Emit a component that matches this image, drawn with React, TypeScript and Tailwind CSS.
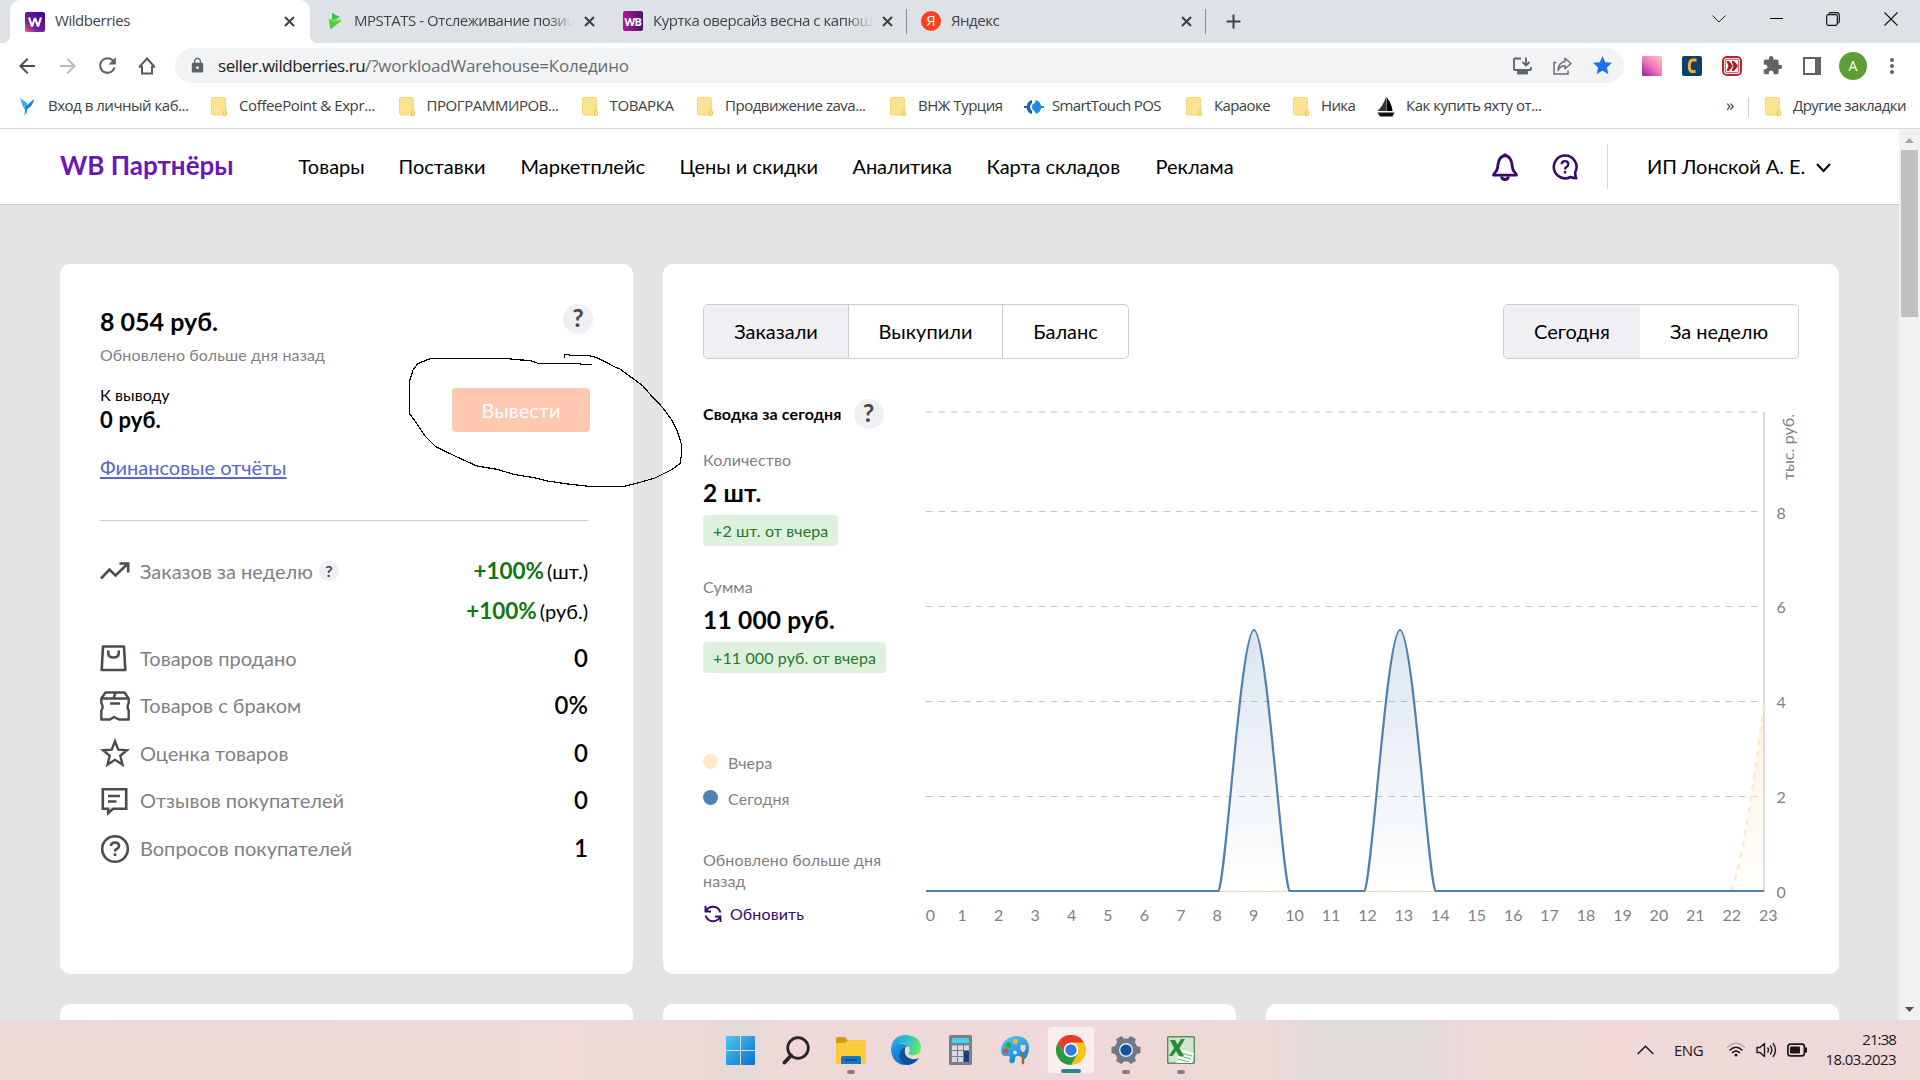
import React from "react";
import {
  MdArrowBack,
  MdArrowForward,
  MdRefresh,
  MdLock,
  MdStar,
  MdExtension,
  MdMoreVert,
} from "react-icons/md";

/* ---------- browser chrome ---------- */

function CloseX() {
  return (
    <svg width="11" height="11" viewBox="0 0 11 11" className="shrink-0">
      <path d="M1 1L10 10M10 1L1 10" stroke="#3c4043" strokeWidth="2" />
    </svg>
  );
}

function TabTitle({ children, className = "" }: { children: React.ReactNode; className?: string }) {
  return (
    <span className={`pb-0.5 whitespace-nowrap text-[15px] tracking-[-0.45px] text-[#3f4347] ${className}`}>
      {children}
    </span>
  );
}

function TabStrip() {
  return (
    <div className="flex h-[43px] bg-[#dee1e6]">
      <span className="mt-[35px] ml-0.5 h-2 w-2 bg-[radial-gradient(circle_at_0_0,transparent_8px,white_8px)]" />
      <div className="flex w-[300px] items-center rounded-t-[10px] bg-white pl-[15px]">
        <svg width="20" height="20" viewBox="0 0 20 20" className="shrink-0">
          <defs>
            <linearGradient id="wbTab" x1="0" y1="1" x2="0.8" y2="0">
              <stop offset="0" stopColor="#e8606a" />
              <stop offset="0.35" stopColor="#7a1fa8" />
              <stop offset="1" stopColor="#430a8c" />
            </linearGradient>
          </defs>
          <rect width="20" height="20" rx="2" fill="url(#wbTab)" />
          <path d="M4 5.500l3 9 3-8.500 3 8.500 3-9" fill="none" stroke="#fff" strokeWidth="2.200" strokeLinejoin="bevel" />
        </svg>
        <TabTitle className="ml-[10px] w-[229px]">Wildberries</TabTitle>
        <CloseX />
      </div>
      <span className="mt-[35px] h-2 w-2 bg-[radial-gradient(circle_at_100%_0,transparent_8px,white_8px)]" />
      <div className="flex w-[291px] items-center pb-[1px]">
        <svg width="13" height="16" viewBox="0 0 13 16" className="ml-[11px] shrink-0">
          <path d="M3 0L11 4 3 8Z" fill="#2dc653" />
          <path d="M0 6L12 6.500 12 9 4 11Z" fill="#7be04a" />
          <path d="M0 6L5 9 12 8 2 16 1 15Z" fill="#4cd137" />
        </svg>
        <TabTitle className="ml-[12px] w-[221px] [mask-image:linear-gradient(to_right,black_88%,transparent)]">
          MPSTATS - Отслеживание пози<span className="opacity-60">ц</span>
        </TabTitle>
        <span className="ml-[9px] flex">
          <CloseX />
        </span>
        <span className="ml-[14px] h-[25px] w-px bg-[#888b90]" />
      </div>
      <div className="flex w-[298px] items-center pb-[1px] pl-[14px]">
        <span className="flex h-5 w-5 shrink-0 items-center justify-center rounded-[2px] bg-gradient-to-r from-[#b10f96] to-[#4a1270] text-[11px] leading-none font-bold tracking-[-0.5px] text-white">
          WB
        </span>
        <TabTitle className="ml-[10px] w-[220px] [mask-image:linear-gradient(to_right,black_88%,transparent)]">
          Куртка оверсайз весна с капюш
        </TabTitle>
        <span className="ml-[9px] flex">
          <CloseX />
        </span>
        <span className="ml-[13px] h-[25px] w-px bg-[#888b90]" />
      </div>
      <div className="flex w-[299px] items-center pb-[1px] pl-[14px]">
        <span className="flex h-5 w-5 shrink-0 items-center justify-center rounded-full bg-[#fc3f1d] pb-px text-[15px] leading-none text-white">
          Я
        </span>
        <TabTitle className="ml-[10px] w-[230px]">Яндекс</TabTitle>
        <CloseX />
        <span className="ml-[13px] h-[25px] w-px bg-[#888b90]" />
      </div>
      <svg width="15" height="15" viewBox="0 0 15 15" className="mt-[14px] ml-[20px]">
        <path d="M7.500 0.500V14.500M0.500 7.500H14.500" stroke="#3c4043" strokeWidth="2" />
      </svg>
      <div className="mr-[22px] ml-auto flex h-[37px] items-center">
        <svg width="14" height="8" viewBox="0 0 14 8" fill="none" stroke="#222" className="mr-[44px]">
          <path d="M0.500 0.500L7 7 13.500 0.500" />
        </svg>
        <span className="mr-[43px] h-px w-[13px] bg-black" />
        <svg width="14" height="14" viewBox="0 0 14 14" fill="none" stroke="#111" strokeWidth="1.200" className="mr-[44px]">
          <rect x="0.700" y="2.700" width="10.600" height="10.600" rx="1.500" />
          <path d="M3 2.500V2.200Q3 0.700 4.500 0.700H10.500Q13.300 0.700 13.300 3.500V9.500Q13.300 11 12 11" />
        </svg>
        <svg width="14" height="14" viewBox="0 0 14 14" stroke="#111" strokeWidth="1.100">
          <path d="M0.500 0.500L13.500 13.500M13.500 0.500L0.500 13.500" />
        </svg>
      </div>
    </div>
  );
}

function Toolbar() {
  return (
    <div className="flex h-[45px] items-center bg-white text-[#5f6368]">
      <MdArrowBack size={24} className="ml-[15px] text-[#494c50]" />
      <MdArrowForward size={24} className="ml-[17px] text-[#b9bbbe]" />
      <MdRefresh size={25} className="ml-[15px]" />
      <svg width="18" height="18" viewBox="0 0 18 18" fill="none" stroke="#55585c" strokeWidth="2" className="ml-[18px]">
        <path d="M1.500 9.800L9 1.500 16.500 9.800M0.800 9.800H4V16.500H14V9.800H17.200" />
      </svg>
      <div className="ml-[19px] flex h-[35px] w-[1449px] items-center rounded-full bg-[#f1f3f4]">
        <MdLock size={17} className="ml-[14px] text-[#5f6368]" />
        <span className="ml-[12px] whitespace-nowrap text-[17px] tracking-[-0.47px] text-[#202124]">
          seller.wildberries.ru
          <span className="tracking-[-0.18px] text-[#686c71]">/?workloadWarehouse=Коледино</span>
        </span>
        <div className="mr-[10px] ml-auto flex items-center">
          <svg width="19" height="18" viewBox="0 0 19 18" fill="none" stroke="#5f6368" strokeWidth="1.800" className="mr-[21px]">
            <path d="M8 1.500H2Q1 1.500 1 2.500V12Q1 13 2 13H17Q18 13 18 12V10" />
            <path d="M13 0.500V8M9.500 5L13 8.500 16.500 5" />
            <rect x="5" y="13.500" width="9" height="3" fill="#5f6368" />
          </svg>
          <svg width="19" height="18" viewBox="0 0 19 18" fill="none" stroke="#6b6e73" strokeWidth="1.500" className="mr-[19px]">
            <path d="M3.500 5.500H1V17H15V13.500" />
            <path d="M12 1.200L18 6.500 12 11.800V8.700Q7.500 8.500 5 13.500 5.500 5.500 12 4.500Z" strokeLinejoin="round" />
          </svg>
          <MdStar size={23} className="text-[#1a73e8]" />
        </div>
      </div>
      <svg width="20" height="20" viewBox="0 0 20 20" className="ml-[18px]">
        <defs>
          <linearGradient id="pinkExt" x1="0" y1="1" x2="0.900" y2="0">
            <stop offset="0" stopColor="#8e1fa5" />
            <stop offset="0.500" stopColor="#f075b8" />
            <stop offset="1" stopColor="#ffc2b8" />
          </linearGradient>
        </defs>
        <rect width="20" height="20" rx="1.500" fill="url(#pinkExt)" />
      </svg>
      <svg width="20" height="20" viewBox="0 0 20 20" className="ml-[20px]">
        <rect width="20" height="20" rx="2" fill="#10406e" />
        <path d="M14.500 4H11Q7.500 4 7.300 9.500T10 15.500H13.500" fill="none" stroke="#fbb216" strokeWidth="3" />
      </svg>
      <svg width="20" height="20" viewBox="0 0 20 20" className="ml-[20px]">
        <rect x="1" y="1" width="18" height="18" rx="4" fill="#fff" stroke="#b9262c" strokeWidth="2" />
        <rect x="3.300" y="3.300" width="13.400" height="13.400" rx="2" fill="none" stroke="#c9474b" strokeWidth="1" />
        <path d="M5 5.500L7 5.500 10.300 10 7 14.500 5 14.500 7 10ZM10 5.500L12 5.500 15.500 10 12 14.500 10 14.500 12 10Z" fill="#a81c22" stroke="#a81c22" />
      </svg>
      <MdExtension size={21} className="ml-[20px]" />
      <span className="ml-[20px] flex h-[18px] w-[18px] border-2 border-r-[6px] border-[#5f6368]" />
      <span className="ml-[18px] flex h-7 w-7 items-center justify-center rounded-full bg-[#5f9e35] text-[14px] text-white">
        A
      </span>
      <MdMoreVert size={24} className="ml-[13px]" />
    </div>
  );
}

function Folder() {
  return (
    <svg width="16" height="19" viewBox="0 0 16 19" className="shrink-0">
      <rect x="0.500" y="0.500" width="14" height="17.500" rx="1.500" fill="#fde391" stroke="#f3d77c" />
      <path d="M12.500 18.500V14.500Q12.500 13 14 13 15.500 13 15.500 14.500V17Q15.500 18.500 14 18.500Z" fill="#fde391" stroke="#efc650" />
    </svg>
  );
}

function Bookmark({ icon, label, className }: { icon?: React.ReactNode; label: string; className: string }) {
  return (
    <div className={`flex shrink-0 items-center whitespace-nowrap ${className}`}>
      <span className="flex w-[28px] shrink-0">{icon ?? <Folder />}</span>
      <span className="pb-0.5">{label}</span>
    </div>
  );
}

function Bookmarks() {
  return (
    <div className="flex h-[41px] items-center border-b border-[#d5d7da] bg-white pb-[3px] pl-[20px] text-[15px] tracking-[-0.48px] text-[#3c4043]">
      <Bookmark
        className="w-[191px]"
        label="Вход в личный каб..."
        icon={
          <svg width="15" height="18" viewBox="0 0 15 18">
            <path d="M0 0L7 5V18Q6 12 3 9Z" fill="#38b0f0" />
            <path d="M14 1Q13 8 7.500 11L4 18 6 8Z" fill="#1583e0" />
          </svg>
        }
      />
      <Bookmark className="w-[187.500px] tracking-[-0.38px]" label="CoffeePoint & Expr..." />
      <Bookmark className="w-[183px] tracking-[-0.43px]" label="ПРОГРАММИРОВ..." />
      <Bookmark className="w-[115.500px] tracking-[-0.38px]" label="ТОВАРКА" />
      <Bookmark className="w-[193px]" label="Продвижение zava..." />
      <Bookmark className="w-[134px]" label="ВНЖ Турция" />
      <Bookmark
        className="w-[162px] tracking-[-0.62px]"
        label="SmartTouch POS"
        icon={
          <svg width="20" height="14" viewBox="0 0 20 14">
            <path d="M8 0V3Q6 4.500 6 7T8 11V14Q3.500 13 2.800 8H0V6H2.800Q3.500 1 8 0Z" fill="#1565b0" />
            <path d="M12 0Q16.500 1.500 17 6H20V8H17Q16.500 12.500 12 14 11.500 11 8.500 9.500 7.500 7 8.500 4.500 11.500 3 12 0Z" fill="#1e88e5" />
          </svg>
        }
      />
      <Bookmark className="w-[107px] tracking-[-0.6px]" label="Караоке" />
      <Bookmark className="w-[84px] tracking-[-0.65px]" label="Ника" />
      <Bookmark
        className="w-[349px] pl-px"
        label="Как купить яхту от..."
        icon={
          <svg width="18" height="20" viewBox="0 0 18 20" className="-ml-px">
            <path d="M9 0V14H0.500Q6 9 9 0Z" fill="#333" />
            <path d="M9.500 0Q15 7 15.500 14H9.500Z" fill="#000" />
            <path d="M0.500 15.500H17.500L15.500 19.500H3Z" fill="#111" />
          </svg>
        }
      />
      <span className="w-[22px] pb-[4px] text-[17px] tracking-normal">»</span>
      <span className="mr-[16px] h-5 w-px bg-[#c9ccd0]" />
      <div className="flex items-center whitespace-nowrap tracking-[-0.56px]">
        <span className="flex w-[28px]">
          <Folder />
        </span>
        <span className="pb-0.5">Другие закладки</span>
      </div>
    </div>
  );
}

/* ---------- page ---------- */

function Header() {
  return (
    <header className="flex h-[76px] items-center border-b border-[#cbcbcd] bg-white pl-[60px] text-black">
      <span className="w-[239px] pb-[3px] text-[26px] font-bold text-[#6a17b8]">WB Партнёры</span>
      <nav className="ml-[-0.500px] flex whitespace-nowrap pb-[2px] text-[20px]">
        <span className="w-[100px]">Товары</span>
        <span className="w-[122px]">Поставки</span>
        <span className="w-[159px]">Маркетплейс</span>
        <span className="w-[173px]">Цены и скидки</span>
        <span className="w-[134px] tracking-[-0.050px]">Аналитика</span>
        <span className="w-[169px] tracking-[-0.050px]">Карта складов</span>
        <span className="w-[78px]">Реклама</span>
      </nav>
      <svg width="26" height="28" viewBox="0 0 26 28" fill="none" stroke="#380b6b" strokeWidth="2.800" strokeLinejoin="round" className="ml-[258px]">
        <path d="M13 2.500Q7 3.500 6 11.500 5.500 17 3.500 19 1.500 20.500 1.500 22.200H24.500Q24.500 20.500 22.500 19 20.500 17 20 11.500 19 3.500 13 2.500Z" />
        <path d="M13 0.500V3M9.500 23.500Q10 26.500 13 26.500T16.500 23.500" />
      </svg>
      <svg width="26" height="26" viewBox="0 0 26 26" fill="none" stroke="#380b6b" strokeWidth="2.600" className="ml-[34px]">
        <path d="M13 1.500A11.400 11.400 0 1 0 18.500 23Q21 24.300 24.300 24.300 22.800 21 23.300 18A11.400 11.400 0 0 0 13 1.500Z" strokeLinejoin="round" />
        <path d="M9.700 10.300Q9.700 7.200 13 7.200T16.300 10.200Q16.300 12 14.600 12.900 13 13.700 13 15.500M13 17V19.600" strokeWidth="2.300" />
      </svg>
      <span className="ml-[29px] h-[45px] w-px bg-[#d5d5da]" />
      <span className="ml-[39.500px] whitespace-nowrap pb-[2px] text-[20px] tracking-[-0.050px]">ИП Лонской А. Е.</span>
      <svg width="15" height="10" viewBox="0 0 15 10" fill="none" stroke="#000" strokeWidth="2" className="mt-0.5 ml-[11px]">
        <path d="M1 1L7.500 8 14 1" />
      </svg>
    </header>
  );
}

function HelpBadge({ small }: { small?: boolean }) {
  return small ? (
    <span className="flex h-5 w-5 items-center justify-center rounded-full bg-[#f0eff4] pb-px text-[16px] font-bold text-[#46464c]">?</span>
  ) : (
    <span className="flex h-[30px] w-[30px] items-center justify-center rounded-full bg-[#f0eff4] pb-[2px] text-[25px] font-bold text-[#46464c]">
      ?
    </span>
  );
}

const iconProps = {
  width: 30,
  height: 30,
  viewBox: "0 0 30 30",
  fill: "none",
  stroke: "#4b4b52",
  strokeWidth: 2.6,
} as const;

function Stat({ icon, label, value }: { icon: React.ReactNode; label: string; value: string }) {
  return (
    <div className="flex h-[47.5px] items-center">
      <span className="flex w-[40px] items-center">{icon}</span>
      <span className="pb-[2px] text-[20px] text-[#7f7f85]">{label}</span>
      <span className="ml-auto pb-[2px] text-[24px] font-semibold text-black">{value}</span>
    </div>
  );
}

function BalanceCard() {
  return (
    <section className="h-[710px] w-[573px] rounded-[10px] bg-white pt-[40px] pr-[45px] pl-[40px]">
      <div className="flex justify-between">
        <div className="flex flex-col whitespace-nowrap">
          <span className="h-[36px] text-[25px] leading-[34px] font-bold text-black">8 054 руб.</span>
          <span className="h-[30px] text-[16px] leading-[29px] tracking-[0.12px] text-[#7f7f85]">Обновлено больше дня назад</span>
          <span className="mt-3 h-[26px] text-[16px] leading-[26px] tracking-[0.1px] text-black">К выводу</span>
          <span className="h-[24px] text-[22px] leading-[24px] font-bold tracking-[0.15px] text-black">0 руб.</span>
          <span className="mt-[11px] mb-px flex h-[48px] items-center">
            <span className="text-[20px] text-[#5867c8] underline decoration-2 underline-offset-[2px]">Финансовые отчёты</span>
          </span>
        </div>
        <div className="mr-[-5px] flex flex-col items-end">
          <HelpBadge />
          <button className="mt-[54px] mr-[3px] h-[44px] w-[138px] rounded-[4px] bg-[#ffc8b1] text-[20px] text-white">Вывести</button>
        </div>
      </div>
      <div className="mt-[28px] h-px bg-[#cbcbd0]" />
      <div className="mt-[30px] flex h-[40px] items-center">
        <span className="flex w-[40px] items-center">
          <svg {...iconProps} height={18} viewBox="0 0 30 18">
            <path d="M1 16.500L9.500 7.500 15.500 13.500 27.500 2M19.500 1.500H28.200V10.500" />
          </svg>
        </span>
        <span className="text-[20px] text-[#7f7f85]">Заказов за неделю</span>
        <span className="ml-[6px]">
          <HelpBadge small />
        </span>
        <span className="ml-auto text-[20px] text-black">
          <span className="mr-[3px] text-[22.500px] font-bold text-[#107810]">+100%</span>(шт.)
        </span>
      </div>
      <div className="mb-[4px] flex h-[40px] items-center justify-end text-[20px] text-black">
        <span className="mr-[3px] text-[22.500px] font-bold text-[#107810]">+100%</span>(руб.)
      </div>
      <Stat
        label="Товаров продано"
        value="0"
        icon={
          <svg {...iconProps} className="mb-[2px]">
            <path d="M3 3.500H24L25.300 27H1.700Z" strokeLinejoin="round" />
            <path d="M8.300 7.500V10Q8.300 14.500 13.500 14.500T18.700 10V7.500" />
          </svg>
        }
      />
      <Stat
        label="Товаров с браком"
        value="0%"
        icon={
          <svg {...iconProps} strokeWidth={2.4} strokeLinejoin="round">
            <path d="M1.300 7.500L5.500 1.500H24.500L28.700 7.500V12Q26.500 16 28.700 19.500V28.500H19L14 26 10 28.500H1.300V20Q3.800 15.500 1.300 12Z" />
            <path d="M1.300 7.500H28.700M15.500 1.500L13.500 7.500M10 12.500H20" />
          </svg>
        }
      />
      <Stat
        label="Оценка товаров"
        value="0"
        icon={
          <svg {...iconProps} strokeWidth={2.4} className="mb-[2px]">
            <path d="M15 3.200L18.300 11.600 27 12.200 20.300 17.800 22.500 26.600 15 21.800 7.500 26.600 9.700 17.800 3 12.200 11.700 11.600Z" />
          </svg>
        }
      />
      <Stat
        label="Отзывов покупателей"
        value="0"
        icon={
          <svg {...iconProps} className="mb-px">
            <path d="M2.800 3.300H26.200V22.700H13L8.200 27V22.700H2.800Z" />
            <path d="M8 10H20M8 15.500H16.500" />
          </svg>
        }
      />
      <Stat
        label="Вопросов покупателей"
        value="1"
        icon={
          <svg {...iconProps}>
            <circle cx="15" cy="15" r="12.800" />
            <path d="M11 12Q11 8.500 15 8.500T19 12Q19 13.800 17 14.800 15 15.700 15 17.500M15 19.300V22" />
          </svg>
        }
      />
    </section>
  );
}

const GRID = [412, 511.5, 606.5, 701.5, 796.5];
const HOURS = Array.from({ length: 24 }, (_, i) => i);
const hourX = (i: number) => (i === 0 ? 930.5 : i < 10 ? 925.8 + i * 36.43 : 930.3 + i * 36.43);
const TODAY =
  "M926 891H1218.500C1226 880 1241 630 1254 630S1282 880 1289.500 891H1364.500C1372 880 1387 630 1400 630S1428 880 1435.500 891H1764";

function Chart() {
  return (
    <svg width="890" height="540" viewBox="916 400 890 540" fill="none" className="font-[Lato,sans-serif]">
      <defs>
        <linearGradient id="todayFill" x1="0" y1="630" x2="0" y2="891" gradientUnits="userSpaceOnUse">
          <stop offset="0" stopColor="#4f81b3" stopOpacity="0.200" />
          <stop offset="1" stopColor="#4f81b3" stopOpacity="0" />
        </linearGradient>
        <linearGradient id="prevFill" x1="0" y1="702" x2="0" y2="891" gradientUnits="userSpaceOnUse">
          <stop offset="0" stopColor="#fdeac7" stopOpacity="0.600" />
          <stop offset="1" stopColor="#fdeac7" stopOpacity="0.050" />
        </linearGradient>
      </defs>
      {GRID.map((y) => (
        <path key={y} d={`M926 ${y}H1759`} stroke="#c6c6c8" strokeWidth="1.200" strokeDasharray="6.500 6" />
      ))}
      <path d="M1730 891C1739 880 1752 800 1764 703V891Z" fill="url(#prevFill)" />
      <path d="M1764 412V891" stroke="#dcdcdc" strokeWidth="2" />
      <path d="M926 891.500H1730" stroke="#d9d4cc" strokeWidth="1" />
      <path d="M926 891H1730" stroke="#fdeac7" strokeWidth="1.500" strokeDasharray="6 5.500" />
      <path d="M1730 891C1739 880 1752 800 1764 703" stroke="#fdeac7" strokeWidth="2.500" strokeDasharray="6 5.500" />
      <path d={TODAY} fill="url(#todayFill)" />
      <path d={TODAY} stroke="#4f81b0" strokeWidth="2.200" strokeLinejoin="round" />
      <g fill="#808086" fontSize="16">
        {HOURS.map((i) => (
          <text key={i} x={hourX(i)} y="920.500" textAnchor="middle">
            {i}
          </text>
        ))}
        {[8, 6, 4, 2, 0].map((v, k) => (
          <text key={v} x="1776.500" y={518.5 + k * 94.9}>
            {v}
          </text>
        ))}
        <text transform="translate(1793.500 480) rotate(-90)" letterSpacing="0.100">
          тыс. руб.
        </text>
      </g>
    </svg>
  );
}

function SummaryCard() {
  return (
    <section className="h-[710px] w-[1176px] rounded-[10px] bg-white pt-[40px] pl-[40px]">
      <div className="flex justify-between pr-[40px] text-[20px] text-black">
        <div className="flex h-[55px] overflow-hidden rounded-[5px] border border-[#cbcbd2]">
          <span className="flex w-[144px] items-center justify-center bg-[#f0eff4] pb-[2px]">Заказали</span>
          <span className="flex w-[154px] items-center justify-center border-l border-[#cbcbd2] pb-[2px]">Выкупили</span>
          <span className="flex w-[126px] items-center justify-center border-l border-[#cbcbd2] pb-[2px]">Баланс</span>
        </div>
        <div className="flex h-[55px] overflow-hidden rounded-[5px] border border-[#cbcbd2]">
          <span className="flex w-[136px] items-center justify-center bg-[#f0eff4] pb-[2px]">Сегодня</span>
          <span className="flex w-[158px] items-center justify-center pb-[2px]">За неделю</span>
        </div>
      </div>
      <div className="mt-[41px] flex">
        <div className="flex w-[213px] shrink-0 flex-col items-start text-[16px] tracking-[0.12px] whitespace-nowrap text-[#7f7f85]">
          <div className="mt-[-1px] flex h-[30px] items-center gap-[12px]">
            <span className="font-bold text-black">Сводка за сегодня</span>
            <HelpBadge />
          </div>
          <span className="mt-[20px] h-[22px] leading-[22px]">Количество</span>
          <span className="mt-[5px] h-[34px] text-[24.500px] leading-[34px] font-bold text-black">2 шт.</span>
          <span className="mt-[5px] h-[31px] rounded-[4px] bg-[#def1dd] px-[10px] leading-[32px] text-[#23792b]">+2 шт. от вчера</span>
          <span className="mt-[30px] h-[22px] leading-[22px]">Сумма</span>
          <span className="mt-[5px] h-[34px] text-[24.500px] leading-[34px] font-bold tracking-[0.2px] text-black">11 000 руб.</span>
          <span className="mt-[5px] h-[31px] rounded-[4px] bg-[#def1dd] px-[10px] leading-[32px] text-[#23792b]">
            +11 000 руб. от вчера
          </span>
          <div className="mt-[78px] flex h-[24px] items-center">
            <span className="mr-[10px] mb-[3px] h-[15px] w-[15px] rounded-full bg-[#fdeac7]" />
            Вчера
          </div>
          <div className="mt-[12px] flex h-[24px] items-center">
            <span className="mr-[10px] mb-[3px] h-[15px] w-[15px] rounded-full bg-[#4f81b3]" />
            Сегодня
          </div>
          <span className="mt-[38px] leading-[21px]">
            Обновлено больше дня
            <br />
            назад
          </span>
          <div className="mt-[11px] flex h-[24px] items-center text-[#380b6b]">
            <svg width="18" height="18" viewBox="0 0 18 18" fill="none" stroke="#380b6b" strokeWidth="1.900" className="mr-[8px] ml-px">
              <path d="M1.500 1V6.500H7M1.800 6.300Q4 1.800 9 1.800 14.500 1.800 16.500 7.500" />
              <path d="M16.500 17V11.500H11M16.200 11.700Q14 16.200 9 16.200 3.500 16.200 1.500 10.500" />
            </svg>
            Обновить
          </div>
        </div>
        <Chart />
      </div>
    </section>
  );
}

function Scrollbar() {
  return (
    <div className="flex w-[21px] shrink-0 flex-col items-center bg-[#f1f1f1]">
      <svg width="9" height="5" viewBox="0 0 9 5" className="mt-[9px]">
        <path d="M0 5L4.500 0 9 5Z" fill="#a3a3a3" />
      </svg>
      <div className="mt-[7px] h-[167px] w-[17px] bg-[#c1c1c1]" />
      <svg width="9" height="5" viewBox="0 0 9 5" className="mt-auto mb-[8px]">
        <path d="M0 0L4.500 5 9 0Z" fill="#505050" />
      </svg>
    </div>
  );
}

/* Freehand pen mark around the withdraw button */
function PenMark() {
  return (
    <svg width="280" height="140" viewBox="405 350 280 140" fill="none" className="pointer-events-none absolute top-[350px] left-[405px]">
      <path
        d="M564.500 358V354.500H567L571 355.500H589L596.500 357.500 616 367.500 620 369 643 386 648 392 663.500 408.500 672 420.500 677.500 431.500 681.500 444.500V455L680 463.500 672 469.500 655 478 641 482 624 486.500H590L568 484 547.500 481 533 477.500 514 474.500 498 469.500 477 466 456 456.500 435.500 446.500 425 436 415 421 409.500 413.500V381.500L413 370 418 363.500 430.500 358.500H508L514 359.500 530 360.500 538.500 363.500H578.500L583 364.500H592"
        stroke="#000"
        strokeWidth="1.200"
        shapeRendering="crispEdges"
      />
    </svg>
  );
}

/* ---------- taskbar ---------- */

function TaskItem({ children, state }: { children: React.ReactNode; state?: "open" | "active" }) {
  return (
    <div
      className={`mx-[3.500px] flex h-12 w-12 flex-col items-center rounded-[4px] pt-[8px] ${
        state === "active" ? "border border-[#ecdede] bg-[#f8eeee] pt-[7px]" : ""
      }`}
    >
      <span className="flex h-8 w-8 items-center justify-center">{children}</span>
      {state === "open" && <span className="mt-[4px] h-[4px] w-[8px] rounded-full bg-[#8a7d80]" />}
      {state === "active" && <span className="mt-[4px] h-[4px] w-[20px] rounded-full bg-[#2b8291]" />}
    </div>
  );
}

function TaskIcons() {
  return (
    <div className="ml-[713px] flex pt-[6px]">
      <TaskItem>
        <svg width="29" height="29" viewBox="0 0 29 29">
          <defs>
            <linearGradient id="winG" x1="0" y1="0" x2="1" y2="1">
              <stop offset="0" stopColor="#4cc8f6" />
              <stop offset="1" stopColor="#0a6fce" />
            </linearGradient>
          </defs>
          <path d="M0 1Q0 0 1 0H14V14H0ZM15 0H28Q29 0 29 1V14H15ZM0 15H14V29H1Q0 29 0 28ZM15 15H29V28Q29 29 28 29H15Z" fill="url(#winG)" />
        </svg>
      </TaskItem>
      <TaskItem>
        <svg width="28" height="29" viewBox="0 0 28 29" fill="none" stroke="#2b2729">
          <circle cx="16" cy="12" r="10.300" strokeWidth="2.800" />
          <path d="M9 19.500L2.500 26.500" strokeWidth="3.800" strokeLinecap="round" />
        </svg>
      </TaskItem>
      <TaskItem state="open">
        <svg width="30" height="27" viewBox="0 0 30 27">
          <path d="M0 1.500Q0 0 1.500 0H9L12 3.500H29V10H0Z" fill="#d99a18" />
          <path d="M0 6H9L12 3.500H29Q30 3.500 30 5V27H0Z" fill="#fbcb3c" />
          <path d="M5 27V21Q5 19 7 19H23Q25 19 25 21V27Z" fill="#1878c8" />
          <path d="M9 23H21" stroke="#0c4a86" strokeWidth="1.500" />
        </svg>
      </TaskItem>
      <TaskItem>
        <svg width="30" height="30" viewBox="0 0 30 30">
          <defs>
            <linearGradient id="edgeA" x1="0" y1="0.300" x2="1" y2="0.600">
              <stop offset="0" stopColor="#1e9ee0" />
              <stop offset="0.550" stopColor="#33c5c9" />
              <stop offset="1" stopColor="#6be85c" />
            </linearGradient>
            <linearGradient id="edgeB" x1="0" y1="0" x2="0.600" y2="1">
              <stop offset="0" stopColor="#1da1e8" />
              <stop offset="1" stopColor="#1267c2" />
            </linearGradient>
          </defs>
          <path d="M0 14Q1.500 0 15.500 0 29 1 30 12.500 30 20 22.500 20.500 17 20.500 17.500 18 19.500 15.500 18 12 15 7.500 9 8.500 3 9.500 0 14Z" fill="url(#edgeA)" />
          <path d="M0 14Q3 8.500 9 8.500 14.500 8.500 17.500 11.500 12 11.500 11 17 10.500 24 18 28 21 29.500 19 29.500 10 31.500 4 25.500 0 20.500 0 14Z" fill="url(#edgeB)" />
          <path d="M12 13.500Q7 18 9 23.500 12 30 18 29.800 24 29 28 22.800 22 26 17 22.500 12 19 14.500 12Z" fill="#10509c" />
        </svg>
      </TaskItem>
      <TaskItem>
        <svg width="23" height="30" viewBox="0 0 23 30">
          <rect width="23" height="30" rx="1.500" fill="#7b8087" />
          <rect x="3" y="3" width="17" height="5" rx="0.500" fill="#45cff2" />
          <path d="M3 10.500H8V15H3ZM9 10.500H14V15H9ZM15 10.500H20V15H15ZM3 16H8V21H3ZM9 16H14V21H9ZM3 22H8V27H3ZM9 22H14V27H9Z" fill="#d6dae0" />
          <rect x="15" y="16" width="5" height="11" fill="#173f86" />
        </svg>
      </TaskItem>
      <TaskItem>
        <svg width="29" height="30" viewBox="0 0 29 30">
          <defs>
            <linearGradient id="paintG" x1="0" y1="0" x2="0.500" y2="1">
              <stop offset="0" stopColor="#55cdf0" />
              <stop offset="1" stopColor="#1583d6" />
            </linearGradient>
          </defs>
          <path d="M0 15Q2 2 15 1 27 1 28 12 28 20 24 24L18 21Q14 20 14 25 13 29 10 28 7 27 9 23 9 20 6 21 0 22 0 15Z" fill="url(#paintG)" />
          <circle cx="7.500" cy="10" r="2.600" fill="#2ba640" />
          <circle cx="14.500" cy="6.500" r="2.600" fill="#f5b82e" />
          <circle cx="4.800" cy="16" r="2.600" fill="#d8512f" />
          <circle cx="14" cy="17.500" r="2" fill="#c9ecfa" />
          <path d="M20.800 16H23.200V28Q22 31 20.800 28Z" fill="#a4632c" />
          <path d="M19.500 10H24.500V14L23 17H21L19.500 14Z" fill="#ead7b8" />
        </svg>
      </TaskItem>
      <TaskItem state="active">
        <svg width="30" height="30" viewBox="0 0 30 30">
          <circle cx="15" cy="15" r="15" fill="#fbc116" />
          <path d="M2 7.500A15 15 0 0 1 28 7.500H15L8.500 18.700Z" fill="#e33b2e" />
          <path d="M2 7.500A15 15 0 0 0 15 30L21.500 18.700H8.500Z" fill="#2b9a47" />
          <circle cx="15" cy="15" r="7.300" fill="#fff" />
          <circle cx="15" cy="15" r="5.700" fill="#2f7de1" />
        </svg>
      </TaskItem>
      <TaskItem state="open">
        <svg width="30" height="30" viewBox="0 0 30 30">
          <g fill="#6f7a86">
            <circle cx="15" cy="15" r="11.500" />
            {[30, 90, 150, 210, 270, 330].map((a) => (
              <path key={a} d="M12 0.500H18L20 8H10Z" transform={`rotate(${a} 15 15)`} />
            ))}
          </g>
          <circle cx="15" cy="15" r="7" fill="#e6eaee" />
          <circle cx="15" cy="15" r="5.600" fill="#0e55a0" />
        </svg>
      </TaskItem>
      <TaskItem state="open">
        <svg width="28" height="28" viewBox="0 0 28 28">
          <rect x="0.700" y="0.700" width="26.600" height="26.600" rx="1" fill="#cfe6cd" stroke="#4f9158" strokeWidth="1.400" />
          <path d="M13 13L27 17 25 27H9Z" fill="#fafdfa" />
          <path d="M14 17L25 20M13 20L24 23M11 23L22 26" stroke="#74ab77" />
          <path d="M3 4H8L10.500 8.500 14 3H18L12.500 12 17 20H12L9 15 5.500 20H2L7 12Z" fill="#2f8a36" />
        </svg>
      </TaskItem>
    </div>
  );
}

function Taskbar() {
  return (
    <footer className="flex h-[60px] bg-[linear-gradient(to_right,#ecd8d7_0%,#f0d9d8_30%,#ecd8d7_36%,#e4d9d5_38.5%,#eed9d8_41%,#f0d8d8_60%,#ebd9d7_66%,#dfdcda_69%,#dfdcda_73%,#eed7d7_77%,#f0d8d8_85%,#eed8d8_100%)] text-[15px] text-[#1c1718]">
      <TaskIcons />
      <div className="mr-[24px] ml-auto flex items-center">
        <svg width="17" height="10" viewBox="0 0 17 10" fill="none" stroke="#1c1718" strokeWidth="1.500">
          <path d="M0.700 9L8.500 1.200 16.300 9" />
        </svg>
        <span className="ml-[20px] w-[29px] tracking-[-0.5px]">ENG</span>
        <svg width="20" height="16" viewBox="0 0 20 16" fill="none" strokeWidth="1.600" stroke="#1c1718" className="ml-[23px]">
          <path d="M1 6Q10 -3.500 19 6" stroke="#b7a9aa" strokeWidth="1.300" />
          <path d="M3.500 8.500Q10 2 16.500 8.500M6 11Q10 7 14 11" />
          <circle cx="10" cy="13" r="1.500" fill="#1c1718" stroke="none" />
        </svg>
        <svg width="21" height="16" viewBox="0 0 21 16" fill="none" strokeWidth="1.400" stroke="#1c1718" strokeLinejoin="round" className="ml-[10px]">
          <path d="M1 5.500H4L8.500 1.500V14.500L4 10.500H1ZM11.500 5.500Q13.500 8 11.500 10.500M14.200 3.500Q17.500 8 14.200 12.500M17 1.200Q22 8 17 14.800" />
        </svg>
        <svg width="21" height="14" viewBox="0 0 21 14" className="ml-[10px]">
          <rect x="0.900" y="1.200" width="16.500" height="11.600" rx="2.500" fill="none" stroke="#1c1718" strokeWidth="1.700" />
          <rect x="3" y="3.500" width="10" height="7" rx="1" fill="#1c1718" />
          <path d="M18 4.500H20V9.500H18Z" fill="#1c1718" />
        </svg>
        <div className="ml-[17px] flex w-[71px] flex-col items-end pb-[2px] leading-[20px]">
          <span className="tracking-[-0.9px]">21:38</span>
          <span className="tracking-[-0.6px]">18.03.2023</span>
        </div>
      </div>
    </footer>
  );
}

export default function App() {
  return (
    <div className="relative flex h-[1080px] w-[1920px] flex-col overflow-hidden bg-white font-['Open_Sans',sans-serif]">
      <TabStrip />
      <Toolbar />
      <Bookmarks />
      <div className="flex h-[891px]">
        <main className="w-[1899px] overflow-hidden bg-[#e4e4e4] font-[Lato,sans-serif]">
          <Header />
          <div className="flex gap-[30px] pt-[59px] pl-[60px]">
            <BalanceCard />
            <SummaryCard />
          </div>
          <div className="mt-[30px] flex gap-[30px] pl-[60px]">
            <div className="h-[40px] w-[573px] rounded-[10px] bg-white" />
            <div className="h-[40px] w-[573px] rounded-[10px] bg-white" />
            <div className="h-[40px] w-[573px] rounded-[10px] bg-white" />
          </div>
        </main>
        <Scrollbar />
      </div>
      <Taskbar />
      <PenMark />
    </div>
  );
}
